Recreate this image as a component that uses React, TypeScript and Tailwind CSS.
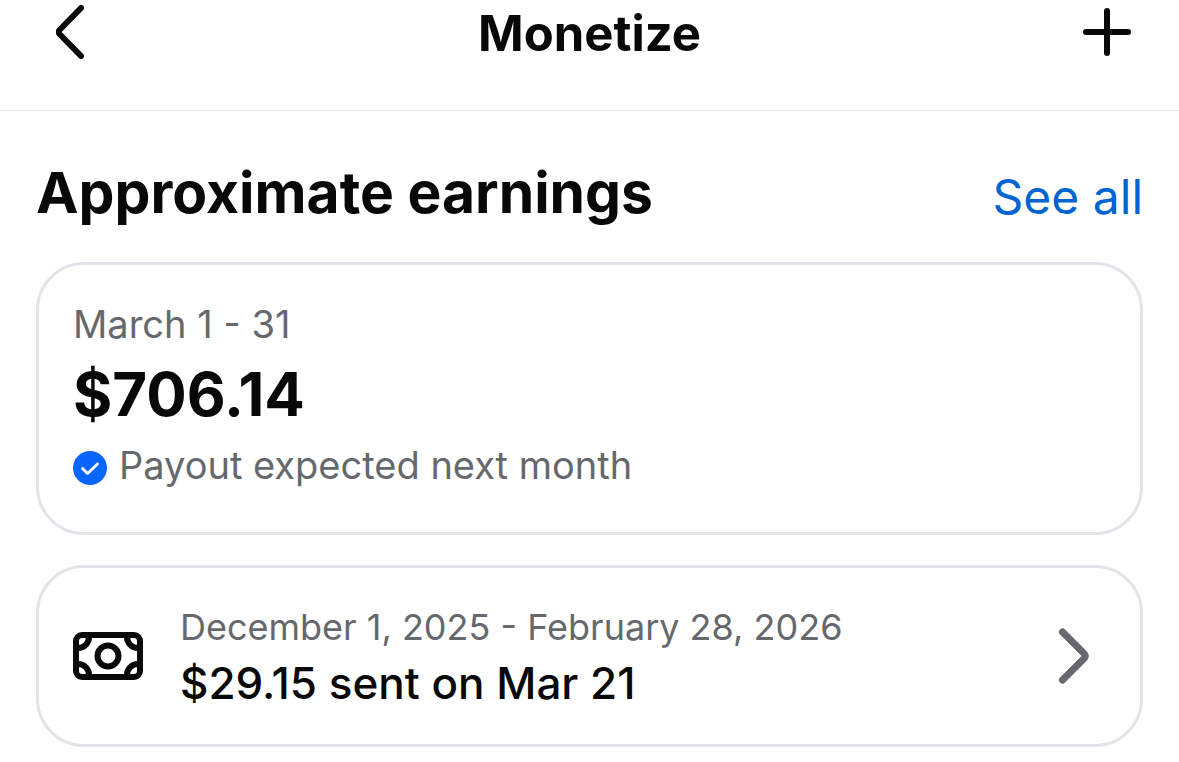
function BackIcon() {
  return (
    <svg viewBox="0 0 32 56" className="h-14 w-8" fill="none" stroke="currentColor" strokeWidth="6" strokeLinecap="round" strokeLinejoin="round" aria-hidden="true">
      <path d="M25 4 3.500 26q-1.500 2 0 4L25 52" />
    </svg>
  )
}

function PlusIcon() {
  return (
    <svg viewBox="0 0 48 48" className="h-12 w-12" fill="none" stroke="currentColor" strokeWidth="6" strokeLinecap="round" aria-hidden="true">
      <path d="M24 3v42M3 24h42" />
    </svg>
  )
}

function CheckBadge() {
  return (
    <svg viewBox="0 0 34 34" className="mt-1.5 h-[34px] w-[34px]" aria-hidden="true">
      <circle cx="17" cy="17" r="17" fill="#0866ff" />
      <path d="m9.500 17.500 5 5L24.500 13" fill="none" stroke="#fff" strokeWidth="2.800" strokeLinecap="round" strokeLinejoin="round" />
    </svg>
  )
}

function CashIcon() {
  return (
    <svg viewBox="0 0 70 48" className="h-12 w-[70px] shrink-0" fill="none" stroke="currentColor" strokeWidth="6" aria-hidden="true">
      <rect x="3" y="3" width="64" height="42" rx="6" />
      <circle cx="35" cy="24" r="10.500" />
      <path d="M16 3v2A11 11 0 0 1 5 16H3M54 3v2a11 11 0 0 0 11 11h2M16 45v-2A11 11 0 0 0 5 32H3M54 45v-2a11 11 0 0 1 11-11h2" />
    </svg>
  )
}

function ChevronIcon() {
  return (
    <svg viewBox="0 0 32 56" className="h-14 w-8 shrink-0 text-[#65686c]" fill="none" stroke="currentColor" strokeWidth="7" strokeLinecap="round" strokeLinejoin="round" aria-hidden="true">
      <path d="m4.500 4 22 22q1.500 2 0 4l-22 22" />
    </svg>
  )
}

export default function App() {
  return (
    <div className="min-h-screen bg-white font-['Inter',sans-serif] text-[#080809]">
      <header className="flex h-[111px] items-start justify-between border-b border-[#e2e4e7] px-12">
        <button type="button" aria-label="Back" className="mt-1 flex w-12 justify-center">
          <BackIcon />
        </button>
        <h1 className="mt-1 text-[49px] leading-[60px] font-bold">Monetize</h1>
        <button type="button" aria-label="Add" className="mt-2">
          <PlusIcon />
        </button>
      </header>

      <main className="px-9 pt-[46px]">
        <div className="flex items-start justify-between">
          <h2 className="text-[57px] leading-[72px] font-bold">Approximate earnings</h2>
          <a href="#earnings" className="pt-2 text-5xl leading-[64px] text-[#0064d1]">
            See all
          </a>
        </div>

        <section className="mt-[33px] rounded-[48px] border-3 border-[#e2e4e9] px-[34px] pt-[35px] pb-10">
          <p className="text-[38px] leading-[48px] text-[#65686c]">March 1 - 31</p>
          <p className="mt-2.5 text-[60px] leading-[72px] font-bold">$706.14</p>
          <div className="mt-2 flex items-center gap-3">
            <CheckBadge />
            <span className="text-[38px] leading-[54px] text-[#65686c]">Payout expected next month</span>
          </div>
        </section>

        <button type="button" className="mt-[30px] flex w-full items-center rounded-[48px] border-3 border-[#e2e4e9] py-8 pr-[50px] pl-[34px] text-left">
          <CashIcon />
          <span className="ml-[37px] flex-1">
            <span className="block text-4xl leading-[54px] text-[#65686c]">December 1, 2025 - February 28, 2026</span>
            <span className="block text-[44px] leading-[58px] font-medium">$29.15 sent on Mar 21</span>
          </span>
          <ChevronIcon />
        </button>
      </main>
    </div>
  )
}
